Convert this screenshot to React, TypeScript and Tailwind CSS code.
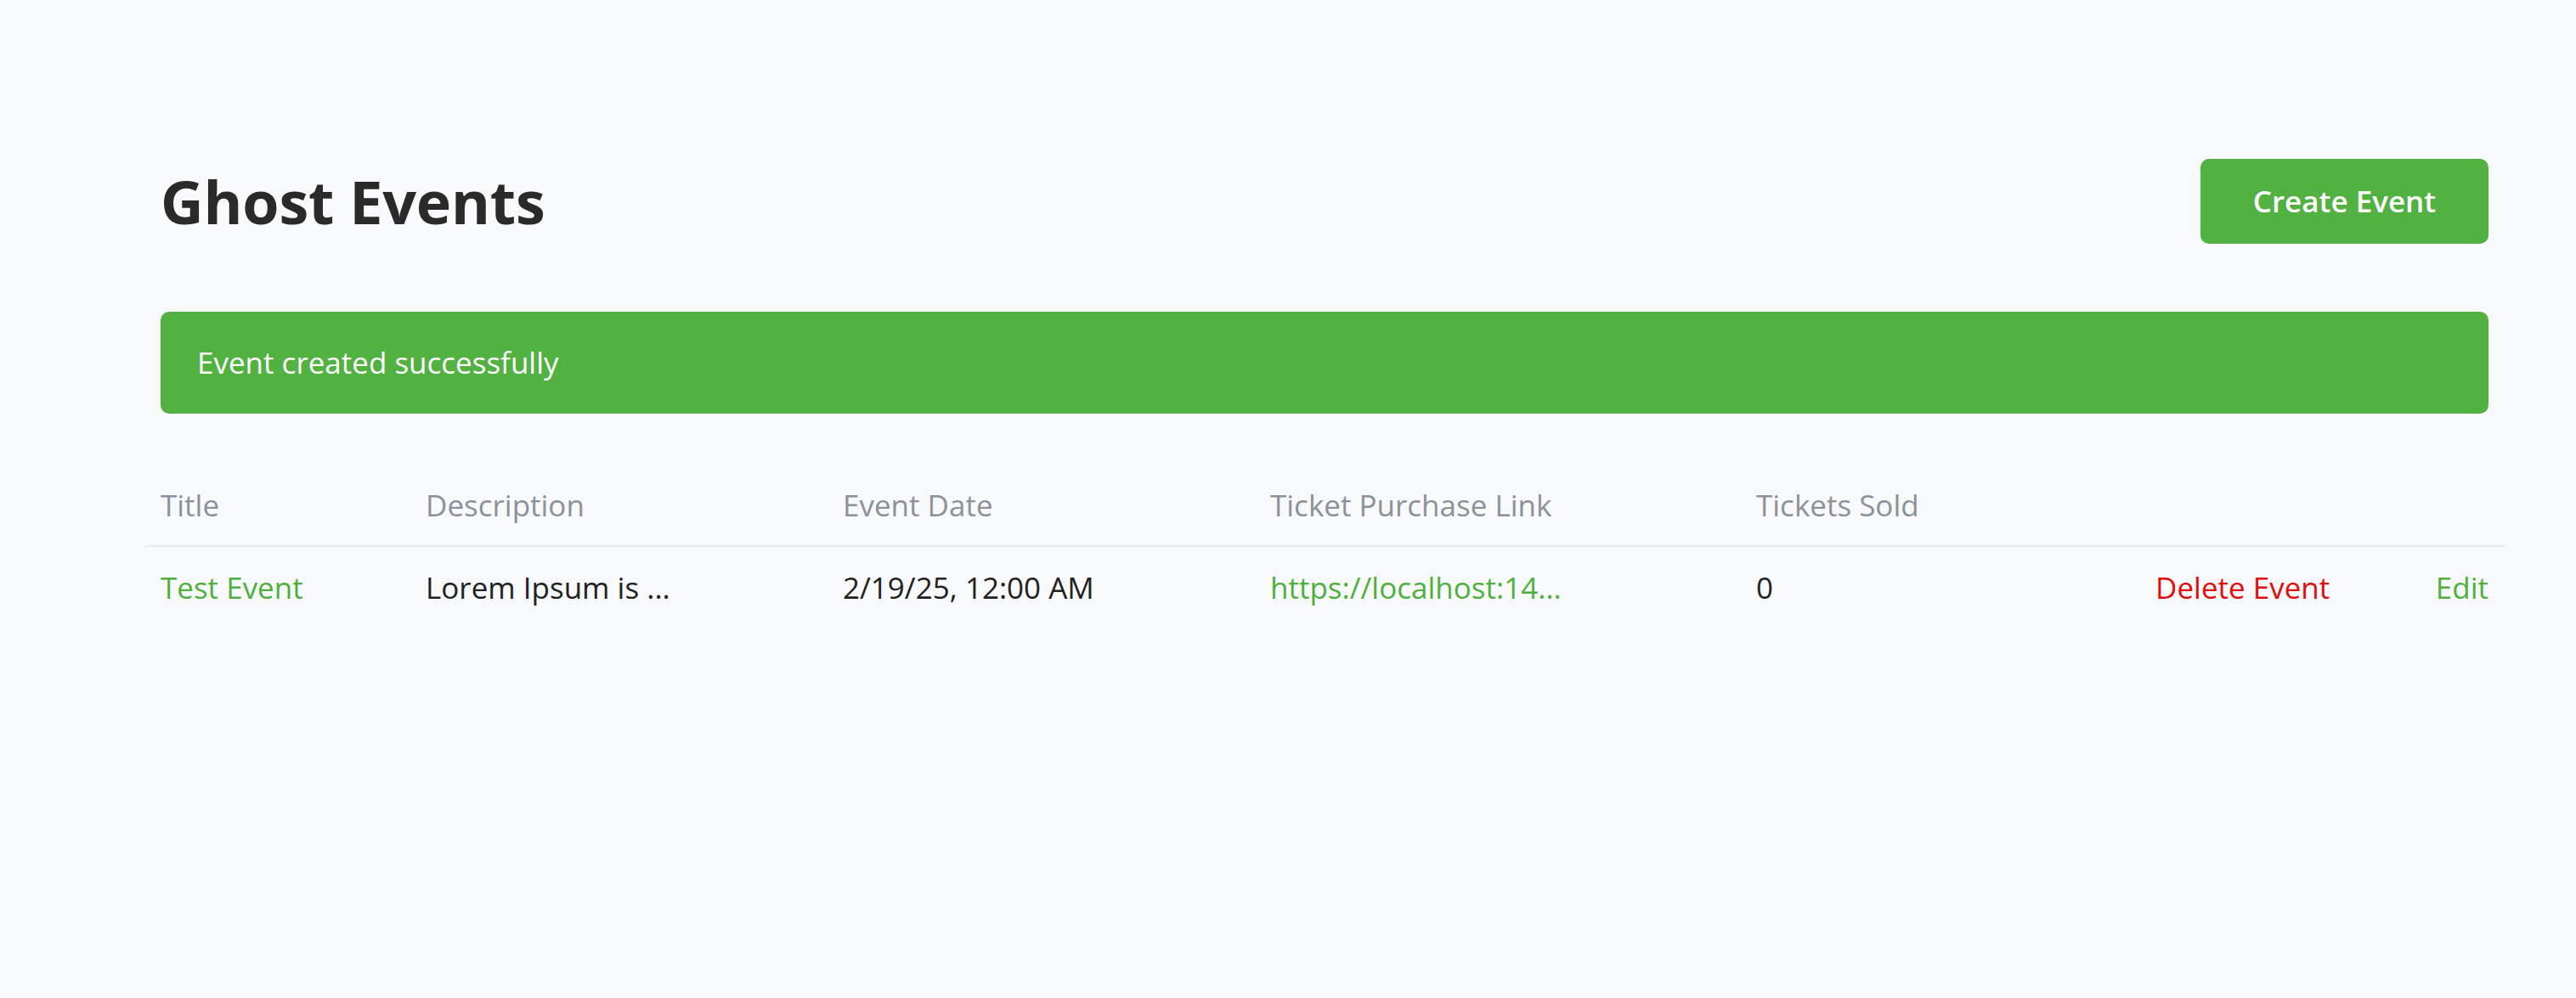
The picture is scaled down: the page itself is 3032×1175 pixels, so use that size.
const events = [
  {
    title: 'Test Event',
    description: 'Lorem Ipsum is ...',
    date: '2/19/25, 12:00 AM',
    link: 'https://localhost:14...',
    sold: 0,
  },
]

const columns = ['Title', 'Description', 'Event Date', 'Ticket Purchase Link', 'Tickets Sold']

export default function App() {
  return (
    <div className="min-h-screen bg-[#f8f9fa] font-['Open_Sans',sans-serif] text-[#222]">
      <div className="ml-[189px] w-[2740px] pt-[187px]">
        <div className="flex h-[100px] items-center justify-between">
          <h1 className="text-[70px] font-bold leading-none tracking-[-0.2px] text-[#2a2a2a]">Ghost Events</h1>
          <button type="button" className="h-[100px] w-[339px] rounded-[10px] bg-[#51b141] text-[35px] font-semibold text-white">
            Create Event
          </button>
        </div>

        <div className="mt-[80px] flex h-[120px] items-center rounded-[10px] bg-[#51b141] pl-[43px] text-[35px] text-white">
          Event created successfully
        </div>

        <table className="-mx-[19px] mt-[60px] w-[2778px] table-fixed border-collapse text-left text-[35px] leading-[48px]">
          <colgroup>
            <col className="w-[312px]" />
            <col className="w-[491px]" />
            <col className="w-[503px]" />
            <col className="w-[572px]" />
            <col className="w-[470px]" />
            <col className="w-[281px]" />
            <col className="w-[149px]" />
          </colgroup>
          <thead>
            <tr className="border-b-2 border-[#e8eaec]">
              {columns.map((column) => (
                <th key={column} className="px-[19px] pb-[23px] pt-[24px] font-normal text-[#8b9299]">{column}</th>
              ))}
              <th />
              <th />
            </tr>
          </thead>
          <tbody>
            {events.map((event) => (
              <tr key={event.title}>
                <td className="px-[19px] pb-[24px] pt-[24px] text-[#4fb040]">{event.title}</td>
                <td className="px-[19px] pb-[24px] pt-[24px]">{event.description}</td>
                <td className="px-[19px] pb-[24px] pt-[24px]">{event.date}</td>
                <td className="px-[19px] pb-[24px] pt-[24px] text-[#4fb040]">{event.link}</td>
                <td className="px-[19px] pb-[24px] pt-[24px]">{event.sold}</td>
                <td className="px-[19px] pb-[24px] pt-[24px] text-[#e10d0d]">Delete Event</td>
                <td className="px-[19px] pb-[24px] pt-[24px] text-right text-[#4fb040]">Edit</td>
              </tr>
            ))}
          </tbody>
        </table>
      </div>
    </div>
  )
}
